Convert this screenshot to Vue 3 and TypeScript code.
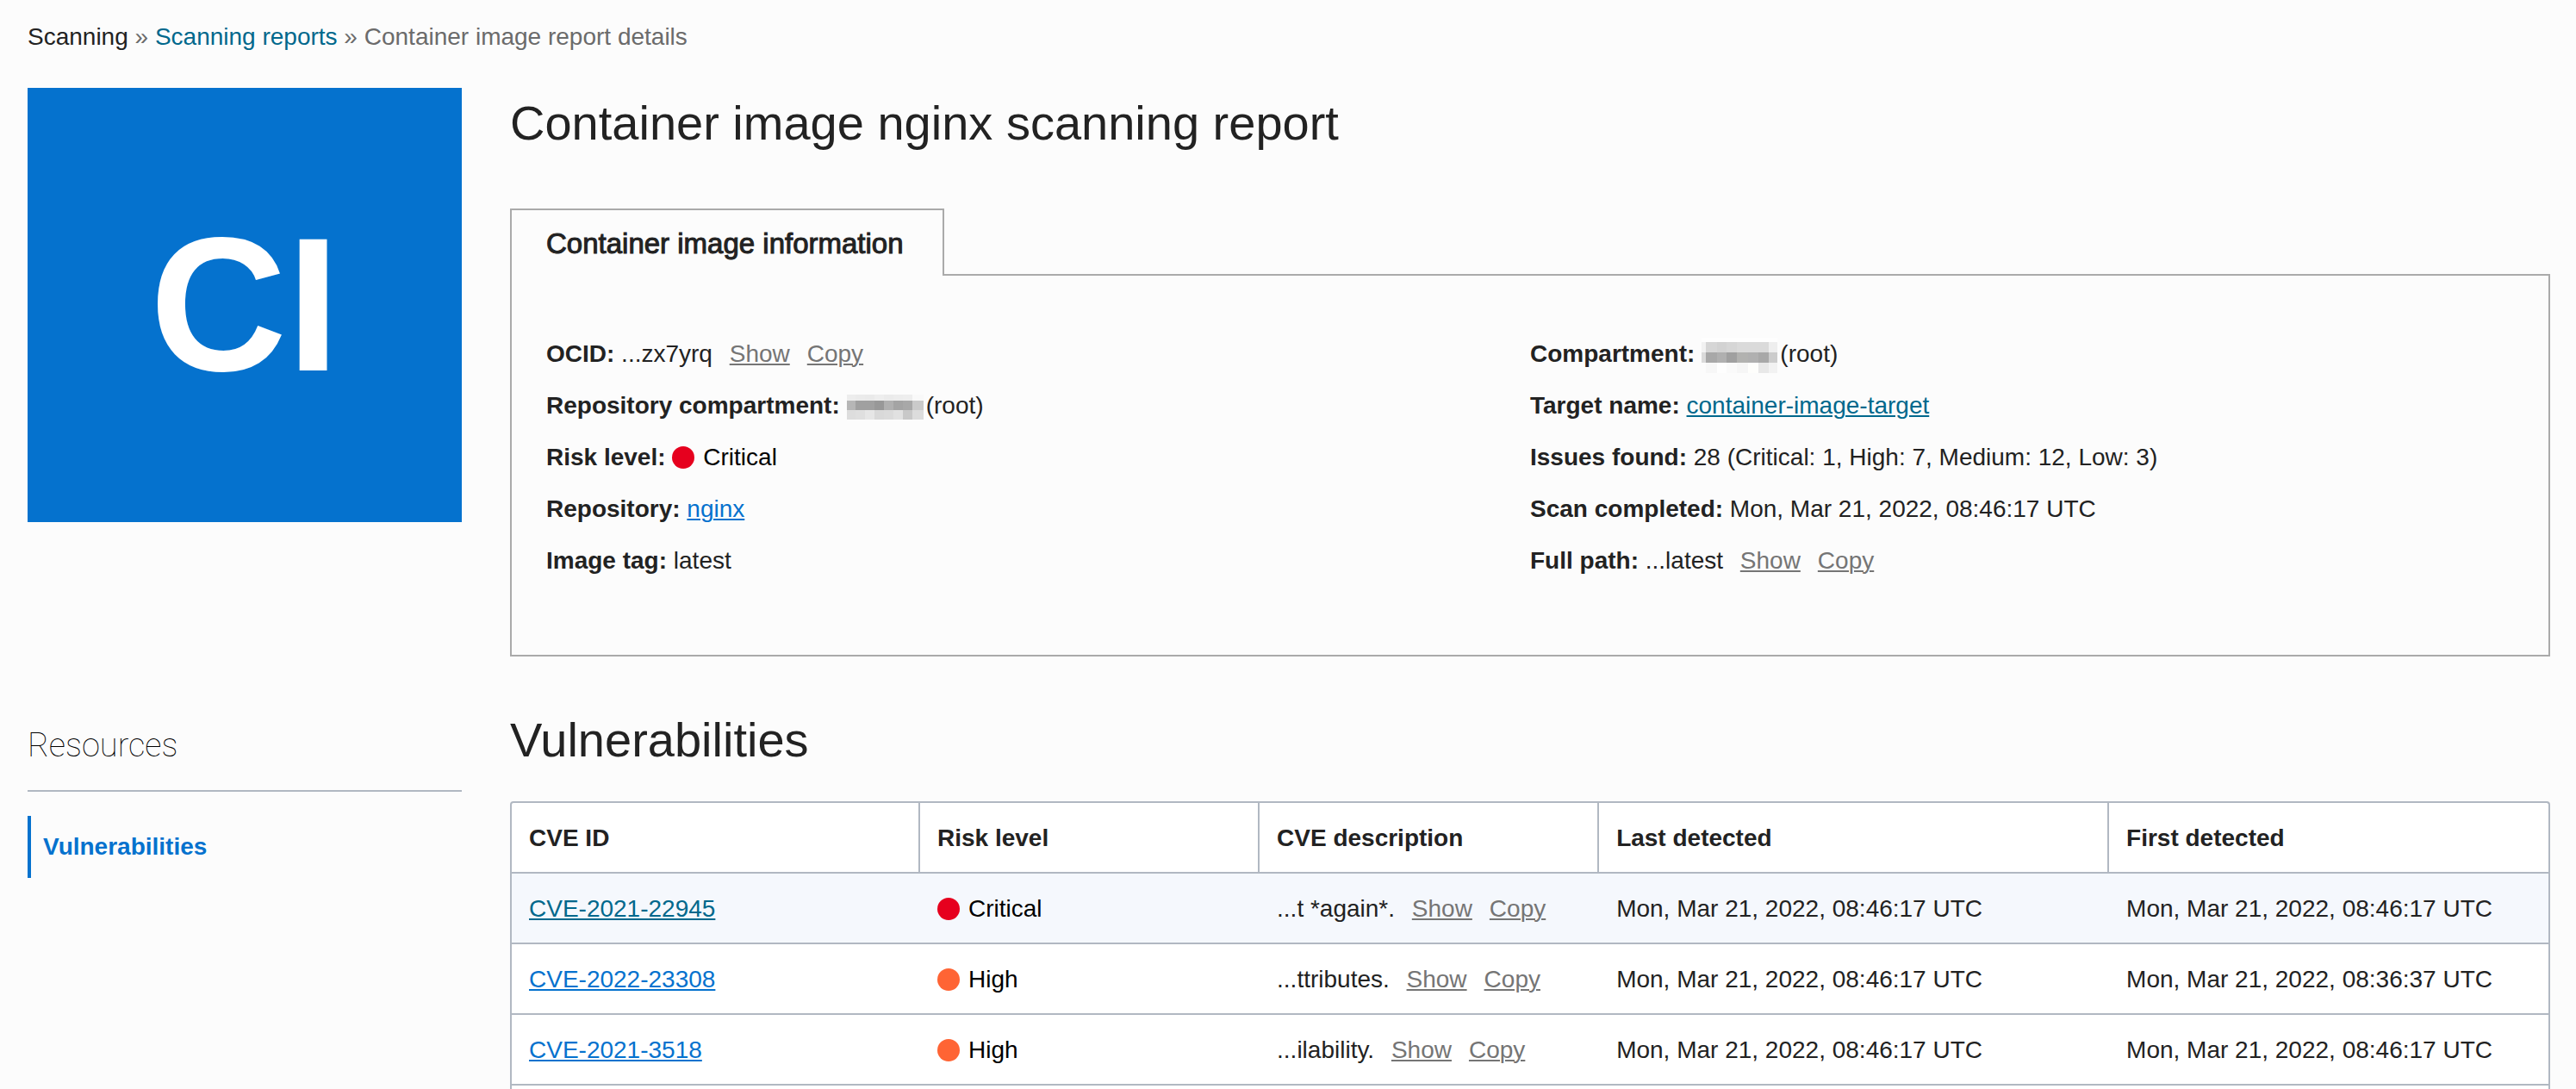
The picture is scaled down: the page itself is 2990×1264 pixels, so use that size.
<script setup lang="ts">
type Risk = 'Critical' | 'High'

interface Vulnerability {
  id: string
  risk: Risk
  description: string
  last: string
  first: string
  active?: boolean
}

const vulnerabilities: Vulnerability[] = [
  { id: 'CVE-2021-22945', risk: 'Critical', description: '...t *again*.', last: 'Mon, Mar 21, 2022, 08:46:17 UTC', first: 'Mon, Mar 21, 2022, 08:46:17 UTC', active: true },
  { id: 'CVE-2022-23308', risk: 'High', description: '...ttributes.', last: 'Mon, Mar 21, 2022, 08:46:17 UTC', first: 'Mon, Mar 21, 2022, 08:36:37 UTC' },
  { id: 'CVE-2021-3518', risk: 'High', description: '...ilability.', last: 'Mon, Mar 21, 2022, 08:46:17 UTC', first: 'Mon, Mar 21, 2022, 08:46:17 UTC' },
]

interface Block { x: number; y: number; w: number; h: number; fill: string }

// Builds the pixelated blocks that stand in for a redacted name.
function mosaic(xs: number[], ys: number[], shades: string[][]): Block[] {
  return shades.flatMap((row, r) =>
    row.map((fill, c) => ({ x: xs[c], y: ys[r], w: xs[c + 1] - xs[c], h: ys[r + 1] - ys[r], fill })),
  )
}

const repositoryMask = mosaic([0, 10, 21, 32, 43, 54, 65, 76, 89], [0, 7, 18, 29], [
  ['#ededed', '#ebebeb', '#eaeaea', '#eeeeee', '#ebebeb', '#ededed', '#eeeeee', '#f9f9f9'],
  ['#b6b6b6', '#a0a0a0', '#a0a0a0', '#989898', '#b0b0b0', '#a4a4a4', '#a8a8a8', '#cacaca'],
  ['#dddddd', '#dfdfdf', '#e6e6e6', '#d9d9d9', '#dbdbdb', '#e1e1e1', '#c8c8c8', '#dcdcdc'],
])
const compartmentMask = mosaic([0, 5, 18, 29, 41, 54, 66, 78, 88], [0, 5, 17, 29, 41], [
  ['#fefefe', '#fefefe', '#fefefe', '#fefefe', '#fefefe', '#fefefe', '#fefefe', '#fefefe'],
  ['#f2f2f2', '#d6d6d6', '#d2d2d2', '#d6d6d6', '#dadada', '#dadada', '#dadada', '#eeeeee'],
  ['#dadada', '#a8a8a8', '#b0b0b0', '#a0a0a0', '#b2b2b0', '#b0b0b0', '#a8a8a8', '#cccccc'],
  ['#fcfcfc', '#f7f7f7', '#fefefe', '#fafafa', '#f6f6f6', '#fefefc', '#e8e8e8', '#f2f2f2'],
])
</script>

<template>
  <div class="page">
    <nav class="breadcrumb" aria-label="Breadcrumb">
      <span class="crumb-root">Scanning</span> » <a href="#reports">Scanning reports</a> » <span>Container image report details</span>
    </nav>

    <div class="body">
      <aside class="side">
        <div class="badge">CI</div>
        <h3 class="side-title">Resources</h3>
        <a class="side-item" href="#vulnerabilities">Vulnerabilities</a>
      </aside>

      <main class="main">
        <h1 class="title">Container image nginx scanning report</h1>

        <button class="tab" type="button">Container image information</button>
        <section class="panel">
          <div class="column">
            <div class="field"><b>OCID:</b> ...zx7yrq <button class="action" type="button">Show</button><button class="action" type="button">Copy</button></div>
            <div class="field">
              <b>Repository compartment:</b>
              <svg class="mask" width="89" height="29" viewBox="0 0 89 29" shape-rendering="crispEdges" aria-hidden="true">
                <rect v-for="(b, i) in repositoryMask" :key="i" :x="b.x" :y="b.y" :width="b.w" :height="b.h" :fill="b.fill" />
              </svg><span>(root)</span>
            </div>
            <div class="field"><b>Risk level:</b> <span class="risk"><i class="dot critical"></i>Critical</span></div>
            <div class="field"><b>Repository:</b> <a class="link" href="#nginx">nginx</a></div>
            <div class="field"><b>Image tag:</b> latest</div>
          </div>
          <div class="column">
            <div class="field">
              <b>Compartment:</b>
              <svg class="mask" width="88" height="41" viewBox="0 0 88 41" shape-rendering="crispEdges" aria-hidden="true">
                <rect v-for="(b, i) in compartmentMask" :key="i" :x="b.x" :y="b.y" :width="b.w" :height="b.h" :fill="b.fill" />
              </svg><span>(root)</span>
            </div>
            <div class="field"><b>Target name:</b> <a class="link active" href="#target">container-image-target</a></div>
            <div class="field"><b>Issues found:</b> 28 (Critical: 1, High: 7, Medium: 12, Low: 3)</div>
            <div class="field"><b>Scan completed:</b> Mon, Mar 21, 2022, 08:46:17 UTC</div>
            <div class="field"><b>Full path:</b> ...latest <button class="action" type="button">Show</button><button class="action" type="button">Copy</button></div>
          </div>
        </section>

        <h2 id="vulnerabilities" class="subtitle">Vulnerabilities</h2>
        <div class="table-frame">
          <table>
            <colgroup>
              <col class="c-id"><col class="c-risk"><col class="c-desc"><col class="c-last"><col class="c-first">
            </colgroup>
            <thead>
              <tr>
                <th scope="col">CVE ID</th>
                <th scope="col">Risk level</th>
                <th scope="col">CVE description</th>
                <th scope="col">Last detected</th>
                <th scope="col">First detected</th>
              </tr>
            </thead>
            <tbody>
              <tr v-for="v in vulnerabilities" :key="v.id" :class="{ highlighted: v.active }">
                <td><a class="link" :class="{ active: v.active }" :href="'#' + v.id">{{ v.id }}</a></td>
                <td><span class="risk"><i class="dot" :class="v.risk.toLowerCase()"></i>{{ v.risk }}</span></td>
                <td>{{ v.description }} <button class="action" type="button">Show</button><button class="action" type="button">Copy</button></td>
                <td>{{ v.last }}</td>
                <td>{{ v.first }}</td>
              </tr>
            </tbody>
          </table>
        </div>
      </main>
    </div>
  </div>
</template>

<style>
body {
  background: #fcfcfc;
}
</style>

<style scoped>
.page {
  box-sizing: border-box;
  display: flex;
  flex-direction: column;
  min-height: 100vh;
  padding: 27px 30px 0 32px;
  color: #222;
  font: 28px/32px "Liberation Sans", Arial, sans-serif;
}

.breadcrumb {
  margin-bottom: 43px;
  color: #6b6b6b;
}
.breadcrumb a {
  color: #00688c;
  text-decoration: none;
}
.crumb-root {
  color: #222;
}

.body {
  flex: 1;
  display: flex;
  gap: 56px;
}

.side {
  flex: none;
  width: 504px;
}
.badge {
  display: flex;
  align-items: center;
  justify-content: center;
  height: 504px;
  background: #0572ce;
  color: #fff;
  font-size: 220px;
  line-height: 240px;
  font-weight: 700;
}
.side-title {
  margin: 235px 0 28px;
  padding-bottom: 28px;
  border-bottom: 2px solid #b1b8c2;
  color: #000;
  font: 100 38px/48px Roboto, "Liberation Sans", sans-serif;
}
.side-item {
  display: block;
  padding-left: 14px;
  border-left: 4px solid #0572ce;
  color: #0572ce;
  font-weight: 700;
  line-height: 72px;
  text-decoration: none;
}

.main {
  flex: 1;
  min-width: 0;
  display: flex;
  flex-direction: column;
  padding-top: 9px;
}
.title,
.subtitle {
  margin: 0;
  font-size: 56px;
  line-height: 64px;
  font-weight: 400;
}
.title {
  margin-bottom: 67px;
}
.subtitle {
  margin: 65px 0 39px;
}

.tab {
  position: relative;
  align-self: flex-start;
  box-sizing: border-box;
  min-width: 504px;
  margin: 0 0 -2px;
  padding: 21px 40px 19px;
  border: 2px solid #aaa;
  border-bottom: 0;
  background: #fcfcfc;
  color: #222;
  font: 33px/36px "Liberation Sans", Arial, sans-serif;
  text-align: left;
  -webkit-text-stroke: 1px #222;
}
.panel {
  display: flex;
  padding: 61px 40px 79px;
  border: 2px solid #aaa;
}
.column {
  flex: 1;
}
.field {
  height: 60px;
  line-height: 60px;
  white-space: nowrap;
}
.mask {
  margin: 0 3px 0 8px;
  vertical-align: middle;
}

.link {
  color: #0572ce;
}
.link.active {
  color: #00688c;
}
.link,
.action {
  text-decoration: underline 2px;
  text-underline-offset: 2px;
}
.action {
  margin: 0 8px 0 12px;
  padding: 0;
  border: 0;
  background: none;
  color: #757575;
  font: inherit;
}

.risk {
  color: #000;
}
.dot {
  display: inline-block;
  width: 26px;
  height: 26px;
  margin-right: 10px;
  border-radius: 50%;
  vertical-align: -4px;
}
.critical {
  background: #e6001e;
}
.high {
  background: #ff6434;
}

.table-frame {
  flex: 1;
  border: 2px solid #b1b8c2;
  border-bottom: 0;
  border-radius: 4px 4px 0 0;
  background: #fff;
  overflow: hidden;
}
table {
  width: 100%;
  table-layout: fixed;
  border-collapse: separate;
  border-spacing: 0;
}
.c-id {
  width: 20.05%;
}
.c-risk,
.c-desc {
  width: 16.67%;
}
.c-last {
  width: 25.04%;
}
.c-first {
  width: 21.57%;
}
th,
td {
  padding: 25px 20px 23px;
  border-bottom: 2px solid #b1b8c2;
  text-align: left;
  white-space: nowrap;
}
th:not(:last-child) {
  border-right: 2px solid #b1b8c2;
}
.highlighted {
  background: #f5f8fd;
}
</style>
